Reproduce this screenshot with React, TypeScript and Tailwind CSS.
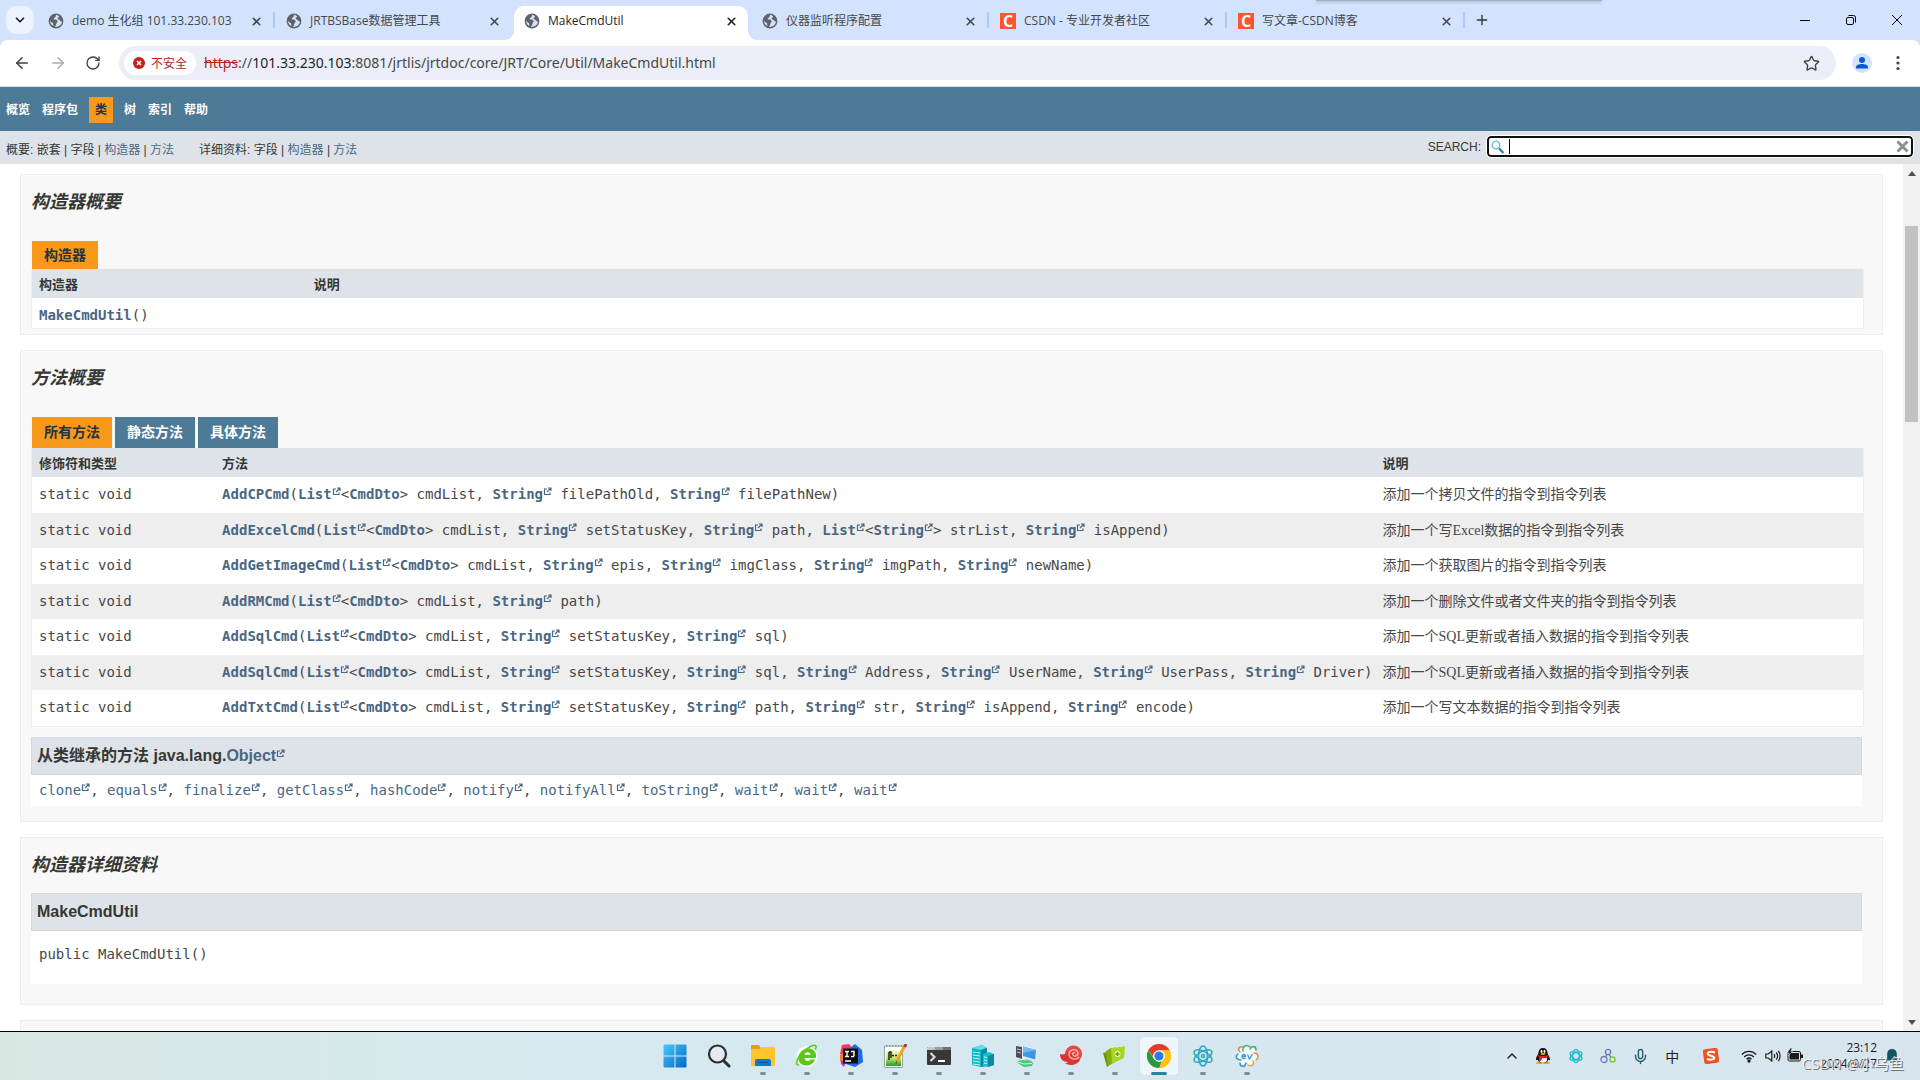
import React from "react";
import { Star, Mic, ChevronUp, ChevronDown, ArrowLeft, ArrowRight, RotateCw, Plus, X } from "lucide-react";

// --- TYPES ---
interface Tab {
  title: string;
  icon: "globe" | "csdn";
  active?: boolean;
  divider?: boolean;
}

interface Method {
  signature: string;
  description: string;
}

// --- DATA ---
const TABS: Tab[] = [
  { title: "demo 生化组 101.33.230.103", icon: "globe", divider: true },
  { title: "JRTBSBase数据管理工具", icon: "globe" },
  { title: "MakeCmdUtil", icon: "globe", active: true },
  { title: "仪器监听程序配置", icon: "globe", divider: true },
  { title: "CSDN - 专业开发者社区", icon: "csdn", divider: true },
  { title: "写文章-CSDN博客", icon: "csdn", divider: true },
];

// [Name] is an internal link, {Name} is a link to the external JDK docs
const METHODS: Method[] = [
  { signature: "[AddCPCmd]({List}<[CmdDto]> cmdList, {String} filePathOld, {String} filePathNew)", description: "添加一个拷贝文件的指令到指令列表" },
  { signature: "[AddExcelCmd]({List}<[CmdDto]> cmdList, {String} setStatusKey, {String} path, {List}<{String}> strList, {String} isAppend)", description: "添加一个写Excel数据的指令到指令列表" },
  { signature: "[AddGetImageCmd]({List}<[CmdDto]> cmdList, {String} epis, {String} imgClass, {String} imgPath, {String} newName)", description: "添加一个获取图片的指令到指令列表" },
  { signature: "[AddRMCmd]({List}<[CmdDto]> cmdList, {String} path)", description: "添加一个删除文件或者文件夹的指令到指令列表" },
  { signature: "[AddSqlCmd]({List}<[CmdDto]> cmdList, {String} setStatusKey, {String} sql)", description: "添加一个SQL更新或者插入数据的指令到指令列表" },
  { signature: "[AddSqlCmd]({List}<[CmdDto]> cmdList, {String} setStatusKey, {String} sql, {String} Address, {String} UserName, {String} UserPass, {String} Driver)", description: "添加一个SQL更新或者插入数据的指令到指令列表" },
  { signature: "[AddTxtCmd]({List}<[CmdDto]> cmdList, {String} setStatusKey, {String} path, {String} str, {String} isAppend, {String} encode)", description: "添加一个写文本数据的指令到指令列表" },
];

const INHERITED = ["clone", "equals", "finalize", "getClass", "hashCode", "notify", "notifyAll", "toString", "wait", "wait", "wait"];

// --- SMALL ICONS ---
const Globe = () => (
  <svg viewBox="0 0 16 16" className="size-4 shrink-0">
    <circle cx="8" cy="8" r="7.4" fill="#5f6368" />
    <path d="M8.6 1.8c-1.4 1-.3 2-1.7 2.7-1.3.6-1.7 1.4-.5 2 1.4.4 2.8.1 3.2 1.4.3 1.2-.9 1.5-1.2 2.6-.2 1-.5 2.2-1.3 3.4 3.4.3 6.5-1.700 6.900-5.300-1.100-.2-1.700-.9-2.500-1.700-.9-.7-1.900-.5-1.900-1.400 0-.8 1.100-.9 1.600-1.700-.8-1.200-1.600-1.700-2.600-2zM2 7.200c.2 1.800 1.800 1.900 2.700 2.700.7.700.2 1.700.9 3-2-.8-3.800-2.700-3.600-5.700z" fill="#d3e1fc" />
  </svg>
);

const Csdn = () => (
  <span className="flex size-4 shrink-0 items-center justify-center bg-[#fc5531] font-['Open_Sans',sans-serif] text-base leading-4 font-bold text-white">C</span>
);

const External = () => (
  <svg viewBox="0 0 9 9" className="mb-[3px] inline-block size-[9px] align-baseline">
    <path d="M4 2H1.500v5.500H7V5.500M5 1h3v3M8 1 4 5" fill="none" stroke="#4a6782" strokeWidth="1.200" />
  </svg>
);

const Signature = ({ text }: { text: string }) => (
  <>
    {text.split(/(\[\w+\]|\{\w+\})/).map((part, i) => {
      if (part.startsWith("[") || part.startsWith("{")) {
        return (
          <a key={i} href="#" className="font-bold text-[#4a6782]">
            {part.slice(1, -1)}
            {part.startsWith("{") && <External />}
          </a>
        );
      }
      return <span key={i}>{part}</span>;
    })}
  </>
);

// --- BROWSER ---
const TabStrip = () => (
  <div className="relative flex h-10 shrink-0 items-end bg-[#d3e3fd] pl-[6px] font-['Open_Sans','Noto_Sans_CJK_SC',sans-serif] text-xs text-[#44474b]">
    <div className="absolute top-0 left-[1316px] h-px w-[286px] bg-[#a3aec2] shadow-[0_1px_3px_#8590a8]"></div>
    <button aria-label="tabs" className="mr-1 mb-[6px] flex size-7 items-center justify-center rounded-[10px] bg-[#ecf3fe]">
      <ChevronDown size={14} strokeWidth={3} color="#1f1f1f" />
    </button>
    {TABS.map((tab) => (
      <div key={tab.title} className="flex h-[34px] w-[238px]">
        <div className={"relative flex flex-1 items-center gap-2 pr-[10px] pb-1 pl-[10px] " + (tab.active ? "mr-1 rounded-t-[10px] bg-white text-[#1f1f1f]" : "")}>
          {tab.active && (
            <svg viewBox="0 0 10 10" className="absolute bottom-0 -left-[10px] size-[10px]"><path d="M10 0v10H0C6 10 10 6 10 0z" fill="#fff" /></svg>
          )}
          {tab.active && (
            <svg viewBox="0 0 10 10" className="absolute -right-[10px] bottom-0 size-[10px]"><path d="M0 0v10h10C4 10 0 6 0 0z" fill="#fff" /></svg>
          )}
          {tab.icon === "globe" ? <Globe /> : <Csdn />}
          <span className="flex-1 whitespace-nowrap">{tab.title}</span>
          <button aria-label="close"><X size={13} strokeWidth={3} /></button>
        </div>
        {!tab.active && <span className={"mt-[6px] mr-px h-4 w-[2px] " + (tab.divider ? "bg-[#a8c7fa]" : "")}></span>}
      </div>
    ))}
    <button aria-label="new tab" className="mb-3 ml-2"><Plus size={16} strokeWidth={2} color="#333" /></button>
    <div className="mb-[14px] ml-auto flex items-center gap-[34px] pr-[17px] text-black">
      <button aria-label="minimize"><svg viewBox="0 0 12 12" className="size-3"><path d="M1 6.500h10" stroke="currentColor" /></svg></button>
      <button aria-label="restore"><svg viewBox="0 0 12 12" className="size-3" fill="none" stroke="currentColor"><rect x="1.500" y="3.500" width="7" height="7" rx="1.500" /><path d="M3.500 1.500h5a2 2 0 0 1 2 2v5" /></svg></button>
      <button aria-label="close window"><svg viewBox="0 0 12 12" className="size-3"><path d="m1 1 10 10M11 1 1 11" stroke="currentColor" /></svg></button>
    </div>
  </div>
);

const Toolbar = () => (
  <div className="bg-[#d3e3fd]">
    <div className="flex h-[47px] shrink-0 items-center rounded-t-lg border-b border-[#dcdfe3] bg-white pr-[14px] pl-[13px]">
      <button aria-label="back"><ArrowLeft size={18} strokeWidth={2} color="#3c4043" /></button>
      <button aria-label="forward" className="ml-[18px]"><ArrowRight size={18} strokeWidth={2} color="#a8aaad" /></button>
      <button aria-label="reload" className="ml-[18px]"><RotateCw size={16} strokeWidth={2} color="#3c4043" /></button>
      <div className="ml-[18px] flex h-[34px] flex-1 items-center rounded-full bg-[#ebeef7] pr-4 pl-[5px]">
        <span className="flex h-6 w-[72px] items-center justify-center gap-[6px] rounded-full bg-white font-['Noto_Sans_CJK_SC',sans-serif] text-xs text-[#b3261e]">
          <svg viewBox="0 0 12 12" className="size-3"><circle cx="6" cy="6" r="6" fill="#c5221f" /><path d="m4 4 4 4M8 4 4 8" stroke="#fff" strokeWidth="1.500" /></svg>
          不安全
        </span>
        <span className="mb-[2px] ml-2 flex-1 font-['Noto_Sans',sans-serif] text-[14px] whitespace-nowrap text-[#474747]">
          <span className="text-[#b3261e] line-through">https</span>://<span className="text-[#1f1f1f]">101.33.230.103</span>:8081/jrtlis/jrtdoc/core/JRT/Core/Util/MakeCmdUtil.html
        </span>
        <button aria-label="bookmark"><Star size={17} strokeWidth={2} color="#444" /></button>
      </div>
      <button aria-label="profile" className="ml-4">
        <svg viewBox="0 0 20 20" className="size-5"><circle cx="10" cy="10" r="10" fill="#d3e3fd" /><circle cx="10" cy="7" r="3" fill="#0b57d0" /><path d="M4 15.500v-1.200C4 11.800 7 11 10 11s6 .8 6 3.300v1.200z" fill="#0b57d0" /></svg>
      </button>
      <button aria-label="menu" className="ml-[18px]">
        <svg viewBox="0 0 16 16" className="size-4" fill="#444"><circle cx="8" cy="2.500" r="1.600" /><circle cx="8" cy="8" r="1.600" /><circle cx="8" cy="13.500" r="1.600" /></svg>
      </button>
    </div>
  </div>
);

// --- JAVADOC PAGE ---
const DocNav = () => (
  <header className="shrink-0 font-['Liberation_Sans','Noto_Sans_CJK_SC',sans-serif] text-xs">
    <nav className="flex h-11 items-center bg-[#4d7a97] pt-[2px] font-bold text-white">
      <a href="#" className="px-[6px]">概览</a>
      <a href="#" className="px-[6px]">程序包</a>
      <span className="mx-[5px] flex h-[26px] items-center bg-[#f8981d] px-[6px] text-[#253441]">类</span>
      <a href="#" className="px-[6px]">树</a>
      <a href="#" className="px-[6px]">索引</a>
      <a href="#" className="px-[6px]">帮助</a>
    </nav>
    <div className="flex h-[33px] items-center bg-[#dee3e9] pr-[7px] pl-[6px] text-[#353833]">
      <div className="mt-1">
        概要: 嵌套 | 字段 | <a href="#" className="text-[#4a6782]">构造器</a> | <a href="#" className="text-[#4a6782]">方法</a>
      </div>
      <div className="mt-1 ml-[25px]">
        详细资料: 字段 | <a href="#" className="text-[#4a6782]">构造器</a> | <a href="#" className="text-[#4a6782]">方法</a>
      </div>
      <label htmlFor="search" className="mb-[2px] ml-auto">SEARCH:</label>
      <div className="relative mb-[2px] ml-[6px] flex h-[21px] w-[426px] items-center rounded-[4px] border-2 border-[#101010] bg-white px-[2px] outline outline-white">
        <svg viewBox="0 0 14 14" className="size-[14px]" fill="none"><circle cx="5" cy="5" r="3.800" stroke="#7cc0e0" strokeWidth="1.600" /><path d="m8 8.500 4.500 4.500" stroke="#2a86c0" strokeWidth="2.400" /></svg>
        <input id="search" type="text" className="h-full flex-1 px-2 outline-none" />
        <span className="absolute left-5 h-[15px] w-px bg-black"></span>
        <button aria-label="reset"><svg viewBox="0 0 13 13" className="size-[13px]"><path d="m1.500 1.500 10 10M11.500 1.500l-10 10" stroke="#8b9096" strokeWidth="3" /></svg></button>
      </div>
    </div>
  </header>
);

const SectionTitle = ({ children }: { children: React.ReactNode }) => (
  <h2 className="text-lg leading-6 font-bold text-[#353833] italic">{children}</h2>
);

const Scrollbar = () => (
  <div className="flex w-[17px] shrink-0 flex-col items-center bg-[#f1f1f1] py-[6px]">
    <svg viewBox="0 0 8 5" className="mt-[1px] h-[5px] w-2"><path d="M0 5 4 0l4 5z" fill="#505050" /></svg>
    <div className="mt-[50px] h-[196px] w-[13px] bg-[#c1c1c1]"></div>
    <svg viewBox="0 0 8 5" className="mt-auto h-[5px] w-2"><path d="m0 0 4 5 4-5z" fill="#505050" /></svg>
  </div>
);

const sectionClass = "mb-[15px] border border-[#ededed] bg-[#f8f8f8] pt-[15px] pr-5 pl-[10px]";
const tableClass = "w-[calc(100%+2px)] border-separate border-spacing-0 border-x border-b border-[#eeeeee]";
const memberHead = "flex h-[38px] items-center border border-[#d0d9e0] bg-[#dee3e9] px-[5px] text-base font-bold text-[#353833]";
const headRow = "h-[29px] bg-[#dee3e9] text-left text-[13px] font-bold text-[#353833]";
const mono = "font-['DejaVu_Sans_Mono',monospace] text-sm text-[#474747]";

const DocPage = () => (
  <div className="flex min-h-0 flex-1 bg-white font-['Liberation_Sans','Noto_Sans_CJK_SC',sans-serif]">
    <main className="flex-1 overflow-hidden px-5 pt-[10px]">
      <section className={sectionClass + " pb-[5px]"}>
        <SectionTitle>构造器概要</SectionTitle>
        <div className="mt-[27px] ml-px flex h-7 w-[66px] items-center justify-center bg-[#f8981d] text-sm font-bold text-[#253441]">构造器</div>
        <table className={tableClass}>
          <thead>
            <tr className={headRow}>
              <th className="w-[15%] pt-[2px] pl-[7px]">构造器</th>
              <th className="pt-[2px] pl-[7px]">说明</th>
            </tr>
          </thead>
          <tbody>
            <tr className="h-[30px] bg-white">
              <td className={mono + " pt-1 pl-[7px]"}><a href="#" className="font-bold text-[#4a6782]">MakeCmdUtil</a>()</td>
              <td></td>
            </tr>
          </tbody>
        </table>
      </section>

      <section className={sectionClass + " pb-[15px]"}>
        <SectionTitle>方法概要</SectionTitle>
        <div className="mt-[27px] ml-px flex h-[31px] gap-[3px] text-sm font-bold text-white">
          <button className="w-20 bg-[#f8981d] pb-[2px] text-[#253441]">所有方法</button>
          <button className="w-20 bg-[#4d7a97] pb-[2px]">静态方法</button>
          <button className="w-20 bg-[#4d7a97] pb-[2px]">具体方法</button>
        </div>
        <table className={tableClass}>
          <thead>
            <tr className={headRow}>
              <th className="w-[10%] pt-[2px] pl-[7px]">修饰符和类型</th>
              <th className="w-0 pt-[2px] pl-[7px]">方法</th>
              <th className="pt-[2px] pl-[7px]">说明</th>
            </tr>
          </thead>
          <tbody>
            {METHODS.map((m, i) => (
              <tr key={i} className={i % 2 === 0 ? "h-9 bg-white" : "h-[35px] bg-[#eeeeef]"}>
                <td className={mono + " pb-[2px] pl-[7px] whitespace-nowrap"}>static void</td>
                <td className={mono + " pr-[3px] pb-[2px] pl-[7px] whitespace-nowrap"}><Signature text={m.signature} /></td>
                <td className="pl-[7px] font-['Liberation_Serif','Noto_Sans_CJK_SC',serif] text-sm text-[#474747]">{m.description}</td>
              </tr>
            ))}
          </tbody>
        </table>
        <h3 className={memberHead + " mt-[10px]"}>
          <span>从类继承的方法 java.lang.<a href="#" className="text-[#4a6782]">Object<External /></a></span>
        </h3>
        <div className={mono + " flex h-[31px] items-center bg-white pb-[2px] pl-2"}>
          <span>
            {INHERITED.map((name, i) => (
              <React.Fragment key={i}>
                {i > 0 && ", "}
                <a href="#" className="text-[#4a6782]">{name}<External /></a>
              </React.Fragment>
            ))}
          </span>
        </div>
      </section>

      <section className={sectionClass + " pb-5"}>
        <SectionTitle>构造器详细资料</SectionTitle>
        <h3 className={memberHead + " mt-4"}>MakeCmdUtil</h3>
        <div className={mono + " flex h-[53px] items-center bg-white pb-[7px] pl-2"}>public MakeCmdUtil()</div>
      </section>

      <section className={sectionClass}></section>
    </main>
    <Scrollbar />
  </div>
);

// --- TASKBAR ---
const APPS: { name: string; running?: boolean; active?: boolean; art: React.ReactNode }[] = [
  {
    name: "start",
    art: (
      <>
        <defs><linearGradient id="win" x1="0" y1="0" x2="1" y2="1"><stop offset="0" stopColor="#4cc8f8" /><stop offset="1" stopColor="#0067c8" /></linearGradient></defs>
        <path d="M.5 1.500A1 1 0 0 1 1.500.5h10v11H.5zM12.500.5h10a1 1 0 0 1 1 1v10h-11zM.5 12.500h11v11h-10a1 1 0 0 1-1-1zM12.500 12.500h11v10a1 1 0 0 1-1 1h-10z" fill="url(#win)" />
      </>
    ),
  },
  {
    name: "search",
    art: <><circle cx="10.500" cy="10" r="8.500" fill="#e4eaef" stroke="#2d2d2d" strokeWidth="2.200" /><path d="m17 17 5 5" stroke="#2d2d2d" strokeWidth="3" strokeLinecap="round" /></>,
  },
  {
    name: "explorer",
    running: true,
    art: (
      <>
        <path d="M0 2a1 1 0 0 1 1-1h7l2 3v3H0z" fill="#e0a010" />
        <path d="M0 5h9l2-2h12a1 1 0 0 1 1 1v17a1 1 0 0 1-1 1H1a1 1 0 0 1-1-1z" fill="#fdc62c" />
        <path d="M4 22v-5a2 2 0 0 1 2-2h12a2 2 0 0 1 2 2v5z" fill="#1078cc" /><path d="M7 18.500h10" stroke="#0a5396" />
      </>
    ),
  },
  {
    name: "360",
    running: true,
    art: (
      <>
        <circle cx="12" cy="12.500" r="10.500" fill="#fff" />
        <path d="M20 15.500h-4.500c-.8 2-5.300 2.500-6-1.500H21C22 7 17 3.500 12 4.500 6 5.500 2.500 10.500 3.500 16c2 7.500 14 7.500 16.500-.5zM9.500 10.800c.8-3.500 5.700-3.300 6 0z" fill="#5cc81e" fillRule="evenodd" />
        <path d="M4 21C-1 22 2 13 9 7c5-4.500 11-7 12-5 .5 1-.2 2.500-1 3.500" fill="none" stroke="#5cc81e" strokeWidth="1.500" />
      </>
    ),
  },
  {
    name: "idea",
    running: true,
    art: (
      <>
        <path d="M1 10 3 1l7-1 4 5-4 8z" fill="#fb3465" /><path d="m1 14 3-5 5 4-4 10-3-3z" fill="#a83fd0" /><path d="m1 11 5-3 3 7-8 2z" fill="#ff7b22" />
        <path d="m12 3 4-3 7 6 1 12-8 5-9-3z" fill="#2069e8" />
        <path d="M4 4.500h15v15H4z" fill="#101010" />
        <path d="M6 7.500h4M8 7.500v5M6 12.500h4M12 7.500h3v4q0 1.500-3 1M6 17h6" fill="none" stroke="#fff" strokeWidth="1.400" />
      </>
    ),
  },
  {
    name: "notepad++",
    running: true,
    art: (
      <>
        <defs><linearGradient id="npp" x1="0" y1="0" x2="0" y2="1"><stop offset="0" stopColor="#f4fad8" /><stop offset=".5" stopColor="#c6e86a" /><stop offset="1" stopColor="#229a34" /></linearGradient></defs>
        <path d="M1.500 2h18v21.500h-18z" fill="#fff" stroke="#98a0a0" /><path d="M3 6h15v16H3z" fill="url(#npp)" />
        <path d="M3 2h16" stroke="#777" strokeDasharray="1.500 1.500" />
        <path d="M6 8v8M6 8h2v6M9 11.500h2M12 11.500h2" stroke="#222" strokeWidth="1.500" fill="none" />
        <path d="M22 1 13.500 18" stroke="#f2a51d" strokeWidth="3" /><path d="m23 0-1.300 3" stroke="#a63b37" strokeWidth="3" /><path d="m13.800 17-.8 3" stroke="#555" />
      </>
    ),
  },
  {
    name: "terminal",
    running: true,
    art: <><path d="M0 4a1 1 0 0 1 1-1h22a1 1 0 0 1 1 1v16a1 1 0 0 1-1 1H1a1 1 0 0 1-1-1z" fill="#383838" /><path d="M0 6V4a1 1 0 0 1 1-1h7v3z" fill="#c8c8c8" /><path d="M8 3h8v3H8z" fill="#9c9c9c" /><path d="M16 3h8v3h-8z" fill="#707070" /><path d="m3.500 9 4 4-4 4" fill="none" stroke="#d8d8d8" strokeWidth="2.200" /><path d="M11 17h7" stroke="#fff" strokeWidth="2" /></>,
  },
  {
    name: "server",
    running: true,
    art: (
      <>
        <path d="m1 4 10-3 5 3v16l-6 3-9-2z" fill="#12b5c6" /><path d="m1 4 10-3 5 3-6 2z" fill="#5ae2ec" /><path d="M10 6l6-2v18l-6 1z" fill="#078b9f" />
        <path d="m2 8 7 1M2 11l7 1M2 14l7 1M2 17l7 1M2 20l7 1" stroke="#c9fbff" strokeWidth="1.200" />
        <path d="m12 10 6-2 5 2v11l-6 2-5-1z" fill="#18bfd0" /><path d="M17 12l6-2v11l-6 2z" fill="#078b9f" /><path d="m13 13 3 .5M13 16l3 .5M13 19l3 .5" stroke="#c9fbff" />
      </>
    ),
  },
  {
    name: "remote",
    running: true,
    art: (
      <>
        <path d="m1 2 6 1v12l-6-2z" fill="#4a5058" /><path d="m2 5 4 1M2 8l4 1" stroke="#bcc4cc" />
        <path d="m7 1 15 4-1 12-14-4z" fill="#e8edf2" /><path d="m8 2.500 13 3.500-.8 9.500L8 12z" fill="#3c96e8" /><path d="m8 2.500 13 3.500L8 9z" fill="#70baf6" />
        <path d="m11 15 6 2 1 3-7-2z" fill="#a5adb5" /><path d="m0 17 9-1 9 3-1 3-8 1z" fill="#3fcb7a" /><path d="m0 17 9 3 8-.5" fill="none" stroke="#d5ffe4" />
      </>
    ),
  },
  {
    name: "shell",
    running: true,
    art: (
      <>
        <circle cx="14.500" cy="10" r="8.500" fill="#e84545" /><path d="M1 10c3 1 6 0 8-2l12 8c-3 6-12 6-15 3 1 0 2 0 3-1-5 0-8-3-8-8z" fill="#dc3434" />
        <path d="M20 13c-3 4-10 2-10-3 0-4 6-6 8.500-2.500 2 4-3 6-4.500 3.500-1-2 1-3 2-2" fill="none" stroke="#ffb9b3" strokeWidth="1.300" />
      </>
    ),
  },
  {
    name: "files",
    running: true,
    art: (
      <>
        <path d="m0 9 4-1 1-2 5 12-6 5z" fill="#6c9800" /><path d="m3 7 5-3 2 1 7-2-1 13-11 6z" fill="#86ad10" /><path d="m8 5 4-2 2 1 8-2-1 12-12 5z" fill="#a9d420" />
        <circle cx="14.500" cy="10" r="3" fill="#e6f4b0" /><path d="M14.500 8v4M12.500 10h4" stroke="#6c9800" strokeWidth="1.400" />
      </>
    ),
  },
  {
    name: "chrome",
    active: true,
    art: (
      <>
        <circle cx="12" cy="12" r="12" fill="#fbc116" />
        <path d="M12 12 1.600 6A12 12 0 0 1 22.400 6z" fill="#e33b2e" /><path d="M12 6h10.400A12 12 0 0 1 12 24l5.200-9z" fill="#fbc116" /><path d="M1.600 6 6.800 15 12 18l2.500-.5L12 24A12 12 0 0 1 1.600 6z" fill="#249a41" /><path d="M1.600 6h20.800H12l-5.200 3-1 3z" fill="#e33b2e" />
        <circle cx="12" cy="12" r="5.800" fill="#fff" /><circle cx="12" cy="12" r="4.600" fill="#2b7bf0" />
      </>
    ),
  },
  {
    name: "atom",
    running: true,
    art: (
      <g fill="none" stroke="#2fa8bf" strokeWidth="1.500">
        <ellipse cx="12" cy="12" rx="4.500" ry="10" /><ellipse cx="12" cy="12" rx="4.500" ry="10" transform="rotate(60 12 12)" /><ellipse cx="12" cy="12" rx="4.500" ry="10" transform="rotate(120 12 12)" />
        <circle cx="12" cy="12" r="1.500" />
      </g>
    ),
  },
  {
    name: "ev",
    running: true,
    art: (
      <>
        <circle cx="12" cy="12" r="10" fill="#f6fbfb" />
        <g fill="none" strokeWidth="1.500" strokeLinecap="round">
          <path d="M8 7C7 2 12 0 15 3" stroke="#38b872" /><path d="M15 5c2-4 6-3 6 1" stroke="#2aa890" /><path d="M19 9c5 0 5 5 2 7" stroke="#f0873a" /><path d="M18 17c2 4-2 6-5 4" stroke="#e6a04a" /><path d="M11 19c-1 5-6 4-6 0" stroke="#3592c8" /><path d="M6 16c-5 0-6-4-3-6" stroke="#2aa0c4" /><path d="M5 8C2 5 4 2 8 3" stroke="#e5823c" />
        </g>
        <path d="M7 12.500h3.500c0-3-4-2.500-3.500.5.300 2 2.500 2 3.500 1M12.500 10.500l2 4.500 3-5" fill="none" stroke="#4499dc" strokeWidth="1.400" />
      </>
    ),
  },
];

const Taskbar = () => (
  <footer className="relative flex h-[49px] shrink-0 items-center justify-center border-t border-black bg-linear-to-r from-[#d9e7e3] via-[#d6e9f0] via-30% to-[#d8e5ef] font-['Open_Sans','Noto_Sans_CJK_SC',sans-serif] text-xs text-[#1b1b1b]">
    <div className="mr-[-2px] flex gap-[6px]">
      {APPS.map((app) => (
        <button key={app.name} aria-label={app.name} className={"relative flex size-[38px] items-center justify-center rounded " + (app.active ? "bg-[#eef5fb] shadow-[0_0_1px_#a9b8c2]" : "")}>
          <svg viewBox="0 0 24 24" className="size-6">{app.art}</svg>
          {app.running && <span className="absolute bottom-0 h-[3px] w-[6px] rounded-full bg-[#7f8b92]"></span>}
          {app.active && <span className="absolute bottom-0 h-[3px] w-4 rounded-full bg-[#25859c]"></span>}
        </button>
      ))}
    </div>
    <div className="absolute right-[20px] flex h-full items-center">
      <ChevronUp size={16} strokeWidth={2} />
      <svg viewBox="0 0 16 16" className="ml-[15px] size-4">
        <ellipse cx="4.500" cy="15" rx="3.500" ry="1.200" fill="#f5a81c" /><ellipse cx="11.500" cy="15" rx="3.500" ry="1.200" fill="#f5a81c" />
        <path d="M8 0c3 0 4.500 2 4.500 5 0 1 2.500 4 2.500 6.500 0 1-1 1-1.700 0C13 14 11 15 8 15s-5-1-5.300-3.500c-.7 1-1.700 1-1.700 0C1 9 3.500 6 3.500 5 3.500 2 5 0 8 0z" fill="#111" />
        <ellipse cx="8" cy="11.500" rx="4" ry="3.300" fill="#fff" /><path d="M3 7c3 1.500 7 1.500 10 0v2c-2 1-4 1.300-6 1.200L6 13H4V9L3 8.500z" fill="#e01b1b" />
        <ellipse cx="6.500" cy="3.500" rx="1" ry="1.400" fill="#fff" /><ellipse cx="9.500" cy="3.500" rx="1" ry="1.400" fill="#fff" /><ellipse cx="8" cy="6" rx="2.500" ry=".9" fill="#f5a81c" />
      </svg>
      <svg viewBox="0 0 24 24" className="ml-[17px] size-4" fill="none" stroke="#22bcd2" strokeWidth="2">
        <ellipse cx="12" cy="12" rx="5" ry="10" /><ellipse cx="12" cy="12" rx="5" ry="10" transform="rotate(60 12 12)" /><ellipse cx="12" cy="12" rx="5" ry="10" transform="rotate(120 12 12)" />
      </svg>
      <svg viewBox="0 0 16 16" className="ml-4 size-4" fill="none" strokeWidth="1.300">
        <circle cx="8" cy="4" r="2.600" stroke="#6a7fb5" /><circle cx="4" cy="11.500" r="3" stroke="#6a7fb5" /><circle cx="12.500" cy="11.500" r="2.600" stroke="#6ccb2a" /><path d="M7 6.500 5.500 9M9 6.500l2 3" stroke="#6a7fb5" />
      </svg>
      <Mic size={17} strokeWidth={2} color="#2b5d6b" className="ml-4" />
      <span className="ml-4 font-['Noto_Sans_CJK_SC',sans-serif] text-sm">中</span>
      <svg viewBox="0 0 16 16" className="ml-6 size-4"><rect x=".5" y=".5" width="15" height="15" rx="2.500" fill="#ee5423" transform="rotate(-8 8 8)" /><path d="M12 4.500C9 3.500 4.500 3.500 4.700 5.800 5 8 11.500 7.500 11.300 10c-.2 2-5 2-7.300.8" fill="none" stroke="#fff" strokeWidth="2" /></svg>
      <svg viewBox="0 0 16 16" className="ml-[22px] size-4" fill="none" stroke="#1b1b1b" strokeWidth="1.300"><path d="M.8 6.500c4-4.300 10.400-4.300 14.400 0M3.200 9c2.700-2.800 6.900-2.800 9.600 0M5.500 11.300c1.500-1.500 3.500-1.500 5 0" /><circle cx="8" cy="13" r="1" fill="#1b1b1b" /></svg>
      <svg viewBox="0 0 16 16" className="ml-2 size-4" fill="none" stroke="#1b1b1b" strokeWidth="1.200"><path d="M.8 6v4h2.500l3.500 3V3L3.300 6zM9 6c.8 1.200.8 2.800 0 4M11.200 4.300c1.700 2.200 1.700 5.200 0 7.400M13.300 2.800c2.400 3 2.400 7.400 0 10.400" /></svg>
      <svg viewBox="0 0 16 16" className="ml-[6px] size-4"><rect x="1" y="3.500" width="12.500" height="9.500" rx="1.500" fill="none" stroke="#1b1b1b" /><path d="M2.500 5H12v6.500H2.500zM14 6.500h2v3.500h-2z" fill="#1b1b1b" /><path d="M3.500 0 0 5h2.200L1 8l4.500-4.500H3.800L5 0z" fill="#1b1b1b" stroke="#d6e6ee" strokeWidth=".5" /></svg>
      <div className="ml-[17px] text-right leading-4">
        <div>23:12</div>
        <div>2024/9/27</div>
      </div>
      <svg viewBox="0 0 16 16" className="mb-px ml-[7px] size-4"><path d="M2 12.500h12L12.800 10V6C12.800 2.800 10.800 1 8 1S3.200 2.800 3.200 6v4zM6 13.500h4c-.5 2-3.500 2-4 0z" fill="#17505f" /></svg>
    </div>
    <div className="absolute right-4 bottom-[5px] text-[15px] leading-6 whitespace-nowrap text-white/70 [text-shadow:1px_1px_0_#777]">CSDN @小乌鱼</div>
  </footer>
);

const App: React.FC = () => {
  return (
    <div className="flex h-screen w-full flex-col overflow-hidden">
      <TabStrip />
      <Toolbar />
      <DocNav />
      <DocPage />
      <Taskbar />
    </div>
  );
};

export default App;
